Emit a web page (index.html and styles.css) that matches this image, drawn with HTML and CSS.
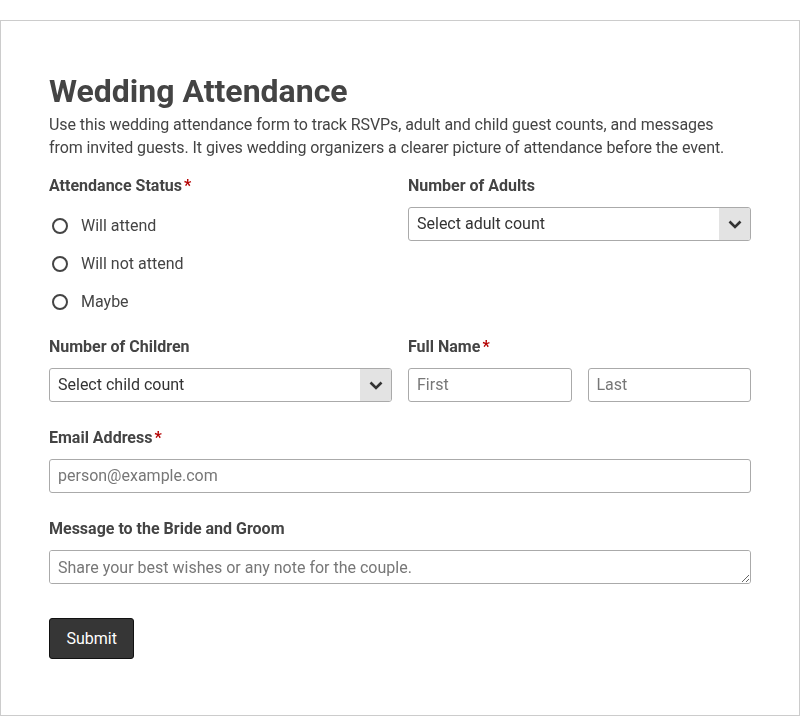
FILE: index.html
```html
<!DOCTYPE html>
<html lang="en">
<head>
    <meta charset="UTF-8">
    <meta name="viewport" content="width=device-width, initial-scale=1.0">
    <title>Wedding Attendance</title>
    <link rel="stylesheet" href="styles.css">
</head>
<body>
    <form class="form-card">
        <h1>Wedding Attendance</h1>
        <p class="intro">Use this wedding attendance form to track RSVPs, adult and child guest counts, and messages from invited guests. It gives wedding organizers a clearer picture of attendance before the event.</p>

        <div class="field-row">
            <div class="field status-field">
                <label class="field-label">Attendance Status<span class="req">*</span></label>
                <div class="radio-list">
                    <label class="radio-option"><input type="radio" name="status" value="yes"> Will attend</label>
                    <label class="radio-option"><input type="radio" name="status" value="no"> Will not attend</label>
                    <label class="radio-option"><input type="radio" name="status" value="maybe"> Maybe</label>
                </div>
            </div>
            <div class="field">
                <label class="field-label" for="adults">Number of Adults</label>
                <div class="select-wrap">
                    <select id="adults">
                        <option>Select adult count</option>
                        <option>1</option>
                        <option>2</option>
                        <option>3</option>
                        <option>4</option>
                    </select>
                    <span class="select-arrow">
                        <svg width="14" height="9" viewBox="0 0 14 9"><path d="M1.5 1.5 L7 7 L12.5 1.5" fill="none" stroke="#333" stroke-width="2.6"/></svg>
                    </span>
                </div>
            </div>
        </div>

        <div class="field-row">
            <div class="field">
                <label class="field-label" for="children">Number of Children</label>
                <div class="select-wrap">
                    <select id="children">
                        <option>Select child count</option>
                        <option>0</option>
                        <option>1</option>
                        <option>2</option>
                        <option>3</option>
                    </select>
                    <span class="select-arrow">
                        <svg width="14" height="9" viewBox="0 0 14 9"><path d="M1.5 1.5 L7 7 L12.5 1.5" fill="none" stroke="#333" stroke-width="2.6"/></svg>
                    </span>
                </div>
            </div>
            <div class="field">
                <label class="field-label">Full Name<span class="req">*</span></label>
                <div class="name-pair">
                    <input type="text" placeholder="First">
                    <input type="text" placeholder="Last">
                </div>
            </div>
        </div>

        <div class="field">
            <label class="field-label" for="email">Email Address<span class="req">*</span></label>
            <input type="email" id="email" placeholder="person@example.com">
        </div>

        <div class="field">
            <label class="field-label" for="message">Message to the Bride and Groom</label>
            <textarea id="message" rows="1" placeholder="Share your best wishes or any note for the couple."></textarea>
        </div>

        <button type="submit">Submit</button>
    </form>
</body>
</html>
```

FILE: styles.css
```css
body {
    margin: 0;
    padding-top: 20px;
    font-family: Roboto, 'Liberation Sans', Arial, sans-serif;
    color: #444;
    background: #fff;
}
.form-card {
    border: 1px solid #ccc;
    padding: 48px 48px 55px;
    min-height: 591px;
}
h1 {
    font-size: 32px;
    line-height: 1.2;
    font-weight: 700;
    margin: 3px 0 3px;
    color: #444;
}
.intro {
    margin: 0 0 17px;
    font-size: 16px;
    line-height: 23px;
    letter-spacing: -0.08px;
}
.field-row {
    display: grid;
    grid-template-columns: 1fr 1fr;
    gap: 16px;
}
.field {
    margin-bottom: 26px;
}
.field-label {
    display: block;
    font-size: 16px;
    line-height: 20px;
    font-weight: 700;
    margin-bottom: 11px;
}
.req {
    color: #b40000;
    margin-left: 2px;
}
.status-field {
    margin-bottom: 16px;
}
.radio-option {
    display: flex;
    align-items: center;
    height: 38px;
    padding-bottom: 1px;
    box-sizing: border-box;
    font-size: 16px;
}
.radio-option input {
    appearance: none;
    width: 16px;
    height: 16px;
    border: 2px solid #444;
    border-radius: 50%;
    margin: 1px 13px 0 3px;
}
.radio-option input:checked {
    background: radial-gradient(#444 40%, #fff 45%);
}
input[type="text"],
input[type="email"],
textarea,
select {
    display: block;
    box-sizing: border-box;
    width: 100%;
    height: 34px;
    padding: 0 8px 1px;
    border: 1px solid #aaa;
    border-radius: 3px;
    background: #fff;
    font-family: inherit;
    font-size: 16px;
    color: #444;
}
textarea {
    padding: 7px 8px;
    line-height: 20px;
    resize: vertical;
}
::placeholder {
    color: #777;
}
.select-wrap {
    position: relative;
}
select {
    appearance: none;
    padding: 0 40px 1px 8px;
    color: #333;
}
.select-arrow {
    position: absolute;
    top: 1px;
    right: 1px;
    bottom: 1px;
    width: 31px;
    background: #e3e3e3;
    border-radius: 0 2px 2px 0;
    display: flex;
    align-items: center;
    justify-content: center;
    pointer-events: none;
}
.name-pair {
    display: grid;
    grid-template-columns: 1fr 1fr;
    gap: 16px;
}
button {
    margin-top: 8px;
    padding: 10px 16.5px;
    border: 1px solid #111;
    border-radius: 3px;
    background: #363636;
    color: #fff;
    font-family: inherit;
    font-size: 16px;
    line-height: 19px;
    cursor: pointer;
}
```
